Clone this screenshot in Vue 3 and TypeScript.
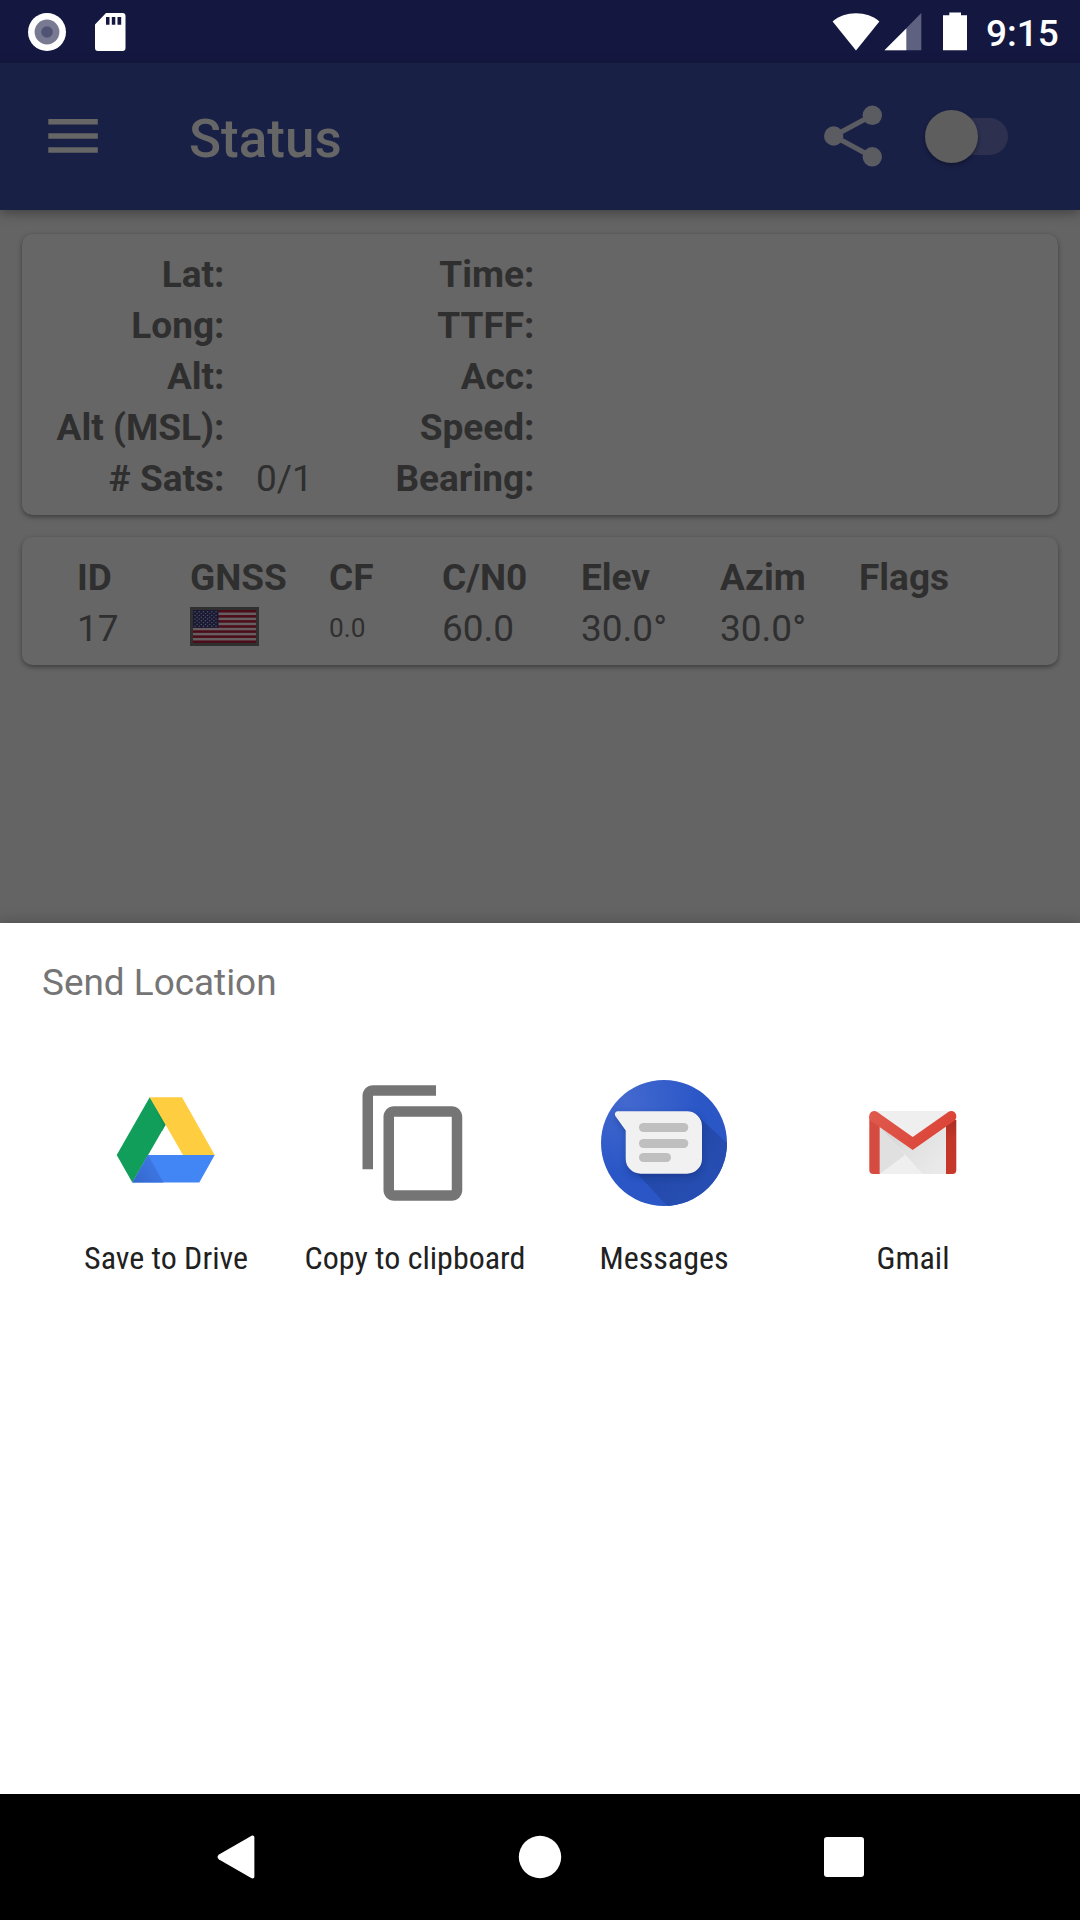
<script setup lang="ts">
interface Fix { label: string; value: string }

const leftFixes: Fix[] = [
  { label: 'Lat:', value: '' },
  { label: 'Long:', value: '' },
  { label: 'Alt:', value: '' },
  { label: 'Alt (MSL):', value: '' },
  { label: '# Sats:', value: '0/1' },
]
const rightFixes: Fix[] = [
  { label: 'Time:', value: '' },
  { label: 'TTFF:', value: '' },
  { label: 'Acc:', value: '' },
  { label: 'Speed:', value: '' },
  { label: 'Bearing:', value: '' },
]
const headers: string[] = ['ID', 'GNSS', 'CF', 'C/N0', 'Elev', 'Azim', 'Flags']

const stars: { x: number; y: number }[] = []
for (let row = 0; row < 9; row++) {
  const count = row % 2 === 0 ? 6 : 5
  for (let col = 0; col < count; col++) {
    stars.push({ x: 2 + col * 4.2 + (row % 2) * 2.1, y: 1.8 + row * 1.8 })
  }
}
</script>

<template>
  <div class="screen">
    <header class="status-bar">
      <svg class="rec" width="40" height="40" viewBox="0 0 40 40">
        <circle cx="20" cy="20" r="19" fill="#fff" />
        <circle cx="20" cy="20" r="12.4" fill="#787a92" />
        <circle cx="20" cy="20" r="5.8" fill="#505373" />
      </svg>
      <svg class="sd" width="32" height="40" viewBox="0 0 32 40">
        <path
          fill="#fff"
          fill-rule="evenodd"
          d="M12 1h16.5a3 3 0 0 1 3 3v31.9a3 3 0 0 1-3 3H4a3 3 0 0 1-3-3V12.5ZM12 5v7.7h3.5V5Zm5.800 0v7.700h3.500V5Zm5.700 0v7.700h3.700V5Z"
        />
      </svg>
      <span class="spacer"></span>
      <svg class="wifi" width="48" height="40" viewBox="0 0 48 40">
        <path fill="#fff" d="M24 38.500.6 9.500C7 4 15 1.300 24 1.300S41 4 47.400 9.500Z" />
      </svg>
      <svg class="signal" width="38" height="40" viewBox="0 0 38 40">
        <path fill="#5f6180" d="M.5 38.300 37.300 1v37.300Z" />
        <path fill="#fff" d="M.5 38.300 22.300 16.500v21.800Z" />
      </svg>
      <svg class="battery" width="24" height="40" viewBox="0 0 24 40">
        <path fill="#fff" d="M6.300.4H18v2.800h6v35.100H0V3.200h6.300Z" />
      </svg>
      <span class="clock">9:15</span>
    </header>

    <nav class="app-bar">
      <svg class="menu" width="50" height="36" viewBox="0 0 50 36">
        <path fill="#666" d="M.3 1h49.500v5.500H.3ZM.3 15.200h49.500v5.500H.3ZM.3 29.300h49.500v5.500H.3Z" />
      </svg>
      <h1 class="title">Status</h1>
      <svg class="share" width="60" height="64" viewBox="0 0 60 64">
        <path d="M49.300 11.300 10.700 32l38.600 21" fill="none" stroke="#5b5b62" stroke-width="5" />
        <g fill="#5b5b62">
          <circle cx="49.300" cy="11.300" r="9.700" />
          <circle cx="10.700" cy="32" r="9.700" />
          <circle cx="49.300" cy="52.800" r="9.700" />
        </g>
      </svg>
      <span class="switch"><span class="thumb"></span></span>
    </nav>

    <main class="content">
      <section class="card fixes">
        <dl v-for="(group, i) in [leftFixes, rightFixes]" :key="i" class="group">
          <div v-for="fix in group" :key="fix.label" class="fix">
            <dt>{{ fix.label }}</dt>
            <dd>{{ fix.value }}</dd>
          </div>
        </dl>
      </section>

      <section class="card sats">
        <b v-for="h in headers" :key="h">{{ h }}</b>
        <span>17</span>
        <span class="flag">
          <svg width="63" height="33" viewBox="0 0 63 33">
            <rect width="63" height="33" fill="#665f62" />
            <rect
              v-for="n in 7"
              :key="n"
              x="0"
              :y="(n - 1) * 5.077"
              width="63"
              height="2.538"
              fill="#4c0c18"
            />
            <rect width="25.500" height="17.770" fill="#1a1a35" />
            <circle v-for="(s, i) in stars" :key="i" :cx="s.x" :cy="s.y" r="0.700" fill="#555566" />
          </svg>
        </span>
        <span class="cf">0.0</span>
        <span>60.0</span>
        <span>30.0°</span>
        <span>30.0°</span>
      </section>
    </main>

    <section class="sheet">
      <h2 class="sheet-title">Send Location</h2>
      <div class="targets">
        <div class="target">
          <svg width="126" height="126" viewBox="0 0 126 126">
            <defs>
              <linearGradient id="driveBlue" x1="0" y1="1" x2="1" y2="0.400">
                <stop offset="0" stop-color="#3367cb" />
                <stop offset="1" stop-color="#4079e8" />
              </linearGradient>
              <linearGradient id="driveGreen" x1="1" y1="0.300" x2="0.500" y2="0.600">
                <stop offset="0" stop-color="#0c8048" />
                <stop offset="1" stop-color="#119e5a" />
              </linearGradient>
            </defs>
            <path fill="#119e5a" d="M46.700 17.300 62.700 44.600 29.300 102.500 13.700 75Z" />
            <path fill="url(#driveGreen)" d="M46.700 17.300 62.700 44.600 59 51Z" />
            <path fill="#ffcd40" d="M46.700 17.300H79L111.700 75H80Z" />
            <path fill="#4285f4" d="M45 75h66.700L96.300 102.500h-67Z" />
            <path fill="url(#driveBlue)" d="M45 75 60.500 102.500H29.300Z" />
          </svg>
          <span class="name">Save to Drive</span>
        </div>
        <div class="target">
          <svg width="126" height="126" viewBox="0 0 24 24">
            <path
              fill="#757575"
              d="M16 1H4c-1.100 0-2 .9-2 2v14h2V3h12V1zm3 4H8c-1.100 0-2 .9-2 2v14c0 1.100.9 2 2 2h11c1.100 0 2-.9 2-2V7c0-1.100-.9-2-2-2zm0 16H8V7h11v14z"
            />
          </svg>
          <span class="name">Copy to clipboard</span>
        </div>
        <div class="target">
          <svg width="126" height="126" viewBox="0 0 126 126">
            <defs>
              <radialGradient id="msgBg" cx="0.200" cy="0.150" r="0.600">
                <stop offset="0" stop-color="#4369cf" />
                <stop offset="1" stop-color="#2a56c6" />
              </radialGradient>
              <clipPath id="msgClip"><circle cx="63" cy="63" r="63" /></clipPath>
              <linearGradient id="msgShade" x1="0" y1="0" x2="1" y2="1">
                <stop offset="0" stop-color="#20459f" />
                <stop offset="1" stop-color="#2850b8" />
              </linearGradient>
              <filter id="msgBlur" x="-20%" y="-20%" width="140%" height="150%">
                <feGaussianBlur stdDeviation="3" />
              </filter>
            </defs>
            <circle cx="63" cy="63" r="63" fill="url(#msgBg)" />
            <g clip-path="url(#msgClip)">
              <path fill="url(#msgShade)" d="M97 36 L130 67V130H70L32 89Z" />
              <path
                fill="#12337f"
                opacity="0.500"
                filter="url(#msgBlur)"
                d="M17 34H86a15 15 0 0 1 15 15V82a15 15 0 0 1-15 15H40a15 15 0 0 1-15-15V53L14.500 38Z"
              />
            </g>
            <path
              fill="#f1f1f1"
              d="M17 31.300H86a15 15 0 0 1 15 15V78.700a15 15 0 0 1-15 15H39.700a15 15 0 0 1-15-15V50.500L14.700 36.500c-1.800-2.500-.4-5.200 2.300-5.200Z"
            />
            <g fill="#bfbfbf">
              <rect x="38" y="43" width="49.300" height="9" rx="4.500" />
              <rect x="38" y="59" width="49.300" height="9" rx="4.500" />
              <rect x="38" y="73" width="32" height="9" rx="4.500" />
            </g>
          </svg>
          <span class="name">Messages</span>
        </div>
        <div class="target">
          <svg width="126" height="126" viewBox="0 0 126 126">
            <defs>
              <linearGradient id="mailRight" x1="0" y1="0" x2="0" y2="1">
                <stop offset="0" stop-color="#a93023" />
                <stop offset="0.350" stop-color="#c23628" />
                <stop offset="1" stop-color="#c5382a" />
              </linearGradient>
              <linearGradient id="mailFold" x1="0" y1="0" x2="1" y2="0.300">
                <stop offset="0" stop-color="#e05a4e" />
                <stop offset="1" stop-color="#db4437" />
              </linearGradient>
              <linearGradient id="mailShade" x1="0" y1="0" x2="1" y2="0.600">
                <stop offset="0" stop-color="#d0d0d0" />
                <stop offset="0.500" stop-color="#e0e0e0" />
                <stop offset="1" stop-color="#e9e9e9" />
              </linearGradient>
            </defs>
            <rect x="24" y="31" width="77" height="63" fill="#efefef" />
            <path fill="#e0e0e0" d="M29.700 47 55 75 29.700 94Z" />
            <path fill="url(#mailShade)" d="M29.700 47 62.700 70 96 47V94H73Z" />
            <path fill="#d54b3f" d="M19.300 36H29.700V94H23.300a4 4 0 0 1-4-4Z" />
            <path fill="url(#mailRight)" d="M96 40H106.300V90a4 4 0 0 1-4 4H96Z" />
            <path
              fill="url(#mailFold)"
              d="M27.300 32 62.700 57 98.300 32c3.700-2.500 8 .2 8 4.200 0 2.400-.7 3.600-2.300 4.800L62.700 70 21.600 41.400c-1.500-1.100-2.300-2.800-2.300-5.200 0-4 4.300-6.700 8-4.200Z"
            />
          </svg>
          <span class="name">Gmail</span>
        </div>
      </div>
    </section>

    <footer class="nav-bar">
      <svg width="44" height="44" viewBox="0 0 44 44">
        <path fill="#fff" d="M37.200.9C39 0 40.400.8 40.400 2.800V41.200c0 2-1.400 2.800-3.200 1.900L5 24.500c-2-1.300-2-3.700 0-5Z" />
      </svg>
      <svg width="44" height="44" viewBox="0 0 44 44">
        <circle cx="22" cy="22" r="21.200" fill="#fff" />
      </svg>
      <svg width="44" height="44" viewBox="0 0 44 44">
        <rect x="2" y="2" width="40" height="40" rx="3" fill="#fff" />
      </svg>
    </footer>
  </div>
</template>

<style>
body {
  margin: 0;
}
</style>

<style scoped>
.screen {
  width: 1080px;
  height: 1920px;
  display: flex;
  flex-direction: column;
  overflow: hidden;
  background: #646464;
  font-family: Roboto, sans-serif;
  font-size: 37px;
  color: #2f2f2f;
}
svg {
  display: block;
  flex: none;
}
.status-bar {
  height: 63px;
  flex: none;
  box-sizing: border-box;
  padding: 11.5px 21px 0 27.3px;
  display: flex;
  align-items: flex-start;
  background: #141840;
}
.sd {
  margin-left: 27px;
}
.spacer {
  flex: 1;
}
.signal {
  margin-left: 3.5px;
}
.battery {
  margin-left: 21.5px;
}
.clock {
  width: 73px;
  margin-left: 19px;
  line-height: 44px;
  font-weight: 500;
  color: #fff;
  white-space: nowrap;
}
.app-bar {
  height: 147px;
  flex: none;
  box-sizing: border-box;
  padding: 0 72px 0 48px;
  display: flex;
  align-items: center;
  background: #192046;
  box-shadow: 0 3px 11px rgba(0, 0, 0, 0.35);
  position: relative;
}
.menu {
  margin-top: -2px;
}
.title {
  flex: 1;
  margin: 5px 0 0 91px;
  font-size: 53px;
  line-height: 62px;
  font-weight: 500;
  color: #666;
}
.share {
  margin: -1px 41px 0 0;
}
.switch {
  width: 84px;
  height: 53px;
  display: flex;
  align-items: center;
  position: relative;
}
.switch::before {
  content: '';
  position: absolute;
  left: 10px;
  right: 0;
  top: 8px;
  height: 37px;
  border-radius: 19px;
  background: #2d304f;
}
.thumb {
  position: relative;
  width: 53px;
  height: 53px;
  margin-left: 1px;
  border-radius: 50%;
  background: #5e5e5e;
  box-shadow: 0 2px 4px rgba(0, 0, 0, 0.35);
}
.content {
  flex: none;
  height: 713px;
  box-sizing: border-box;
  padding: 24px 22px 0;
}
.card {
  box-sizing: border-box;
  border-radius: 10.5px;
  background: #666;
  box-shadow: 0 2px 5px rgba(0, 0, 0, 0.4);
}
.fixes {
  height: 281px;
  padding-top: 15px;
  display: flex;
}
.group {
  width: 310px;
  margin: 0;
}
.fix {
  height: 51px;
  line-height: 51px;
  display: flex;
}
dt {
  width: 202.5px;
  text-align: right;
  font-weight: 700;
  white-space: nowrap;
}
dd {
  margin: 0 0 0 31.5px;
}
.sats {
  height: 128px;
  margin-top: 22px;
  padding: 15px 0 0 55px;
  display: grid;
  grid-template-columns: 113px 139px 113px 139px 139px 139px 139px;
  grid-auto-rows: 51px;
  line-height: 51px;
}
.flag {
  width: 63px;
  height: 33px;
  margin-top: 4px;
  border: 3px solid #303030;
}
.cf {
  font-size: 26.25px;
}
.sheet {
  flex: 1;
  position: relative;
  background: #fff;
  box-shadow: 0 0 14px rgba(0, 0, 0, 0.25);
}
.sheet-title {
  margin: 38px 0 0 42px;
  line-height: 44px;
  font-size: 36.9px;
  font-weight: 400;
  color: #757575;
}
.targets {
  margin: 75px 42.5px 0 41.5px;
  display: grid;
  grid-template-columns: repeat(4, 249px);
}
.target {
  display: flex;
  flex-direction: column;
  align-items: center;
}
.name {
  margin-top: 33px;
  line-height: 38px;
  font-size: 32px;
  font-stretch: condensed;
  color: #212121;
  white-space: nowrap;
}
.nav-bar {
  height: 126px;
  flex: none;
  display: flex;
  align-items: center;
  justify-content: center;
  gap: 260px;
  background: #000;
}
</style>
